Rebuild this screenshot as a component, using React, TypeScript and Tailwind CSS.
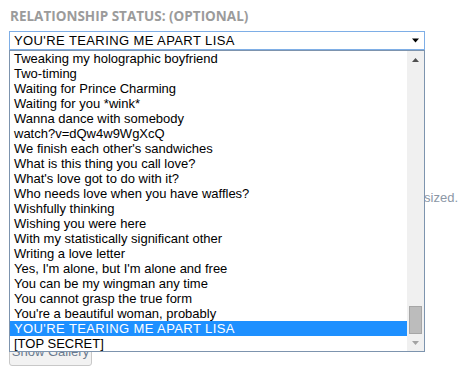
const OPTIONS = [
  "Tweaking my holographic boyfriend",
  "Two-timing",
  "Waiting for Prince Charming",
  "Waiting for you *wink*",
  "Wanna dance with somebody",
  "watch?v=dQw4w9WgXcQ",
  "We finish each other's sandwiches",
  "What is this thing you call love?",
  "What's love got to do with it?",
  "Who needs love when you have waffles?",
  "Wishfully thinking",
  "Wishing you were here",
  "With my statistically significant other",
  "Writing a love letter",
  "Yes, I'm alone, but I'm alone and free",
  "You can be my wingman any time",
  "You cannot grasp the true form",
  "You're a beautiful woman, probably",
  "YOU'RE TEARING ME APART LISA",
  "[TOP SECRET]",
];

const SELECTED = "YOU'RE TEARING ME APART LISA";

function Tri({ down, className }: { down?: boolean; className?: string }) {
  return (
    <svg width="7" height="4" viewBox="0 0 7 4" className={className}>
      <path d={down ? "M0 0H7L3.5 4Z" : "M0 4H7L3.5 0Z"} fill="currentColor" />
    </svg>
  );
}

export default function App() {
  return (
    <div className="relative h-[376px] w-[470px] overflow-hidden bg-white font-['Liberation_Sans',Arial,sans-serif]">
      <div className="pl-[10px] pt-[7px] font-['Open_Sans',sans-serif] text-[13.5px] font-bold leading-[18px] text-[#9b9b9b]">
        RELATIONSHIP STATUS: (OPTIONAL)
      </div>

      <div className="ml-[9px] mt-[6px] flex h-[19px] w-[416px] items-center border border-[#7eaee6] pl-[4px] pr-[5px] text-[13px] leading-[17px] text-black">
        <span className="flex-1 tracking-[0.4px]">{SELECTED}</span>
        <Tri down className="h-[5px] w-[7px] text-black" />
      </div>

      <p className="mt-[138px] w-[458px] text-right text-[13px] leading-[20px] text-[#8c97a6]">
        Images larger than 2MB will be resized.
      </p>

      <button className="ml-[9px] mt-[129px] h-[29px] w-[83px] rounded-[3px] border border-[#c8c8c8] bg-[#f2f2f2] text-[13px] text-[#6b7a8e]">
        Show Gallery
      </button>

      {/* open dropdown list */}
      <div className="absolute left-[9px] top-[50px] flex h-[302px] w-[416px] border border-[#7d94ae] bg-white">
        <ul className="flex-1 overflow-hidden text-[13px] leading-[15px] text-black">
          {OPTIONS.map((o) => (
            <li
              key={o}
              className={
                o === SELECTED
                  ? "h-[15px] whitespace-nowrap bg-[#1e90ff] pl-[4px] tracking-[0.4px] text-white"
                  : "h-[15px] whitespace-nowrap pl-[4px]"
              }
            >
              {o}
            </li>
          ))}
        </ul>
        <div className="flex w-[17px] flex-col items-center bg-[#f0f0f0]">
          <div className="flex h-[17px] items-center justify-center">
            <Tri className="text-[#505050]" />
          </div>
          <div className="flex-1" />
          <div className="h-[28px] w-[13px] border border-[#a6a6a6] bg-[#bcbcbc]" />
          <div className="flex h-[17px] items-center justify-center">
            <Tri down className="text-[#a3a3a3]" />
          </div>
        </div>
      </div>
    </div>
  );
}
